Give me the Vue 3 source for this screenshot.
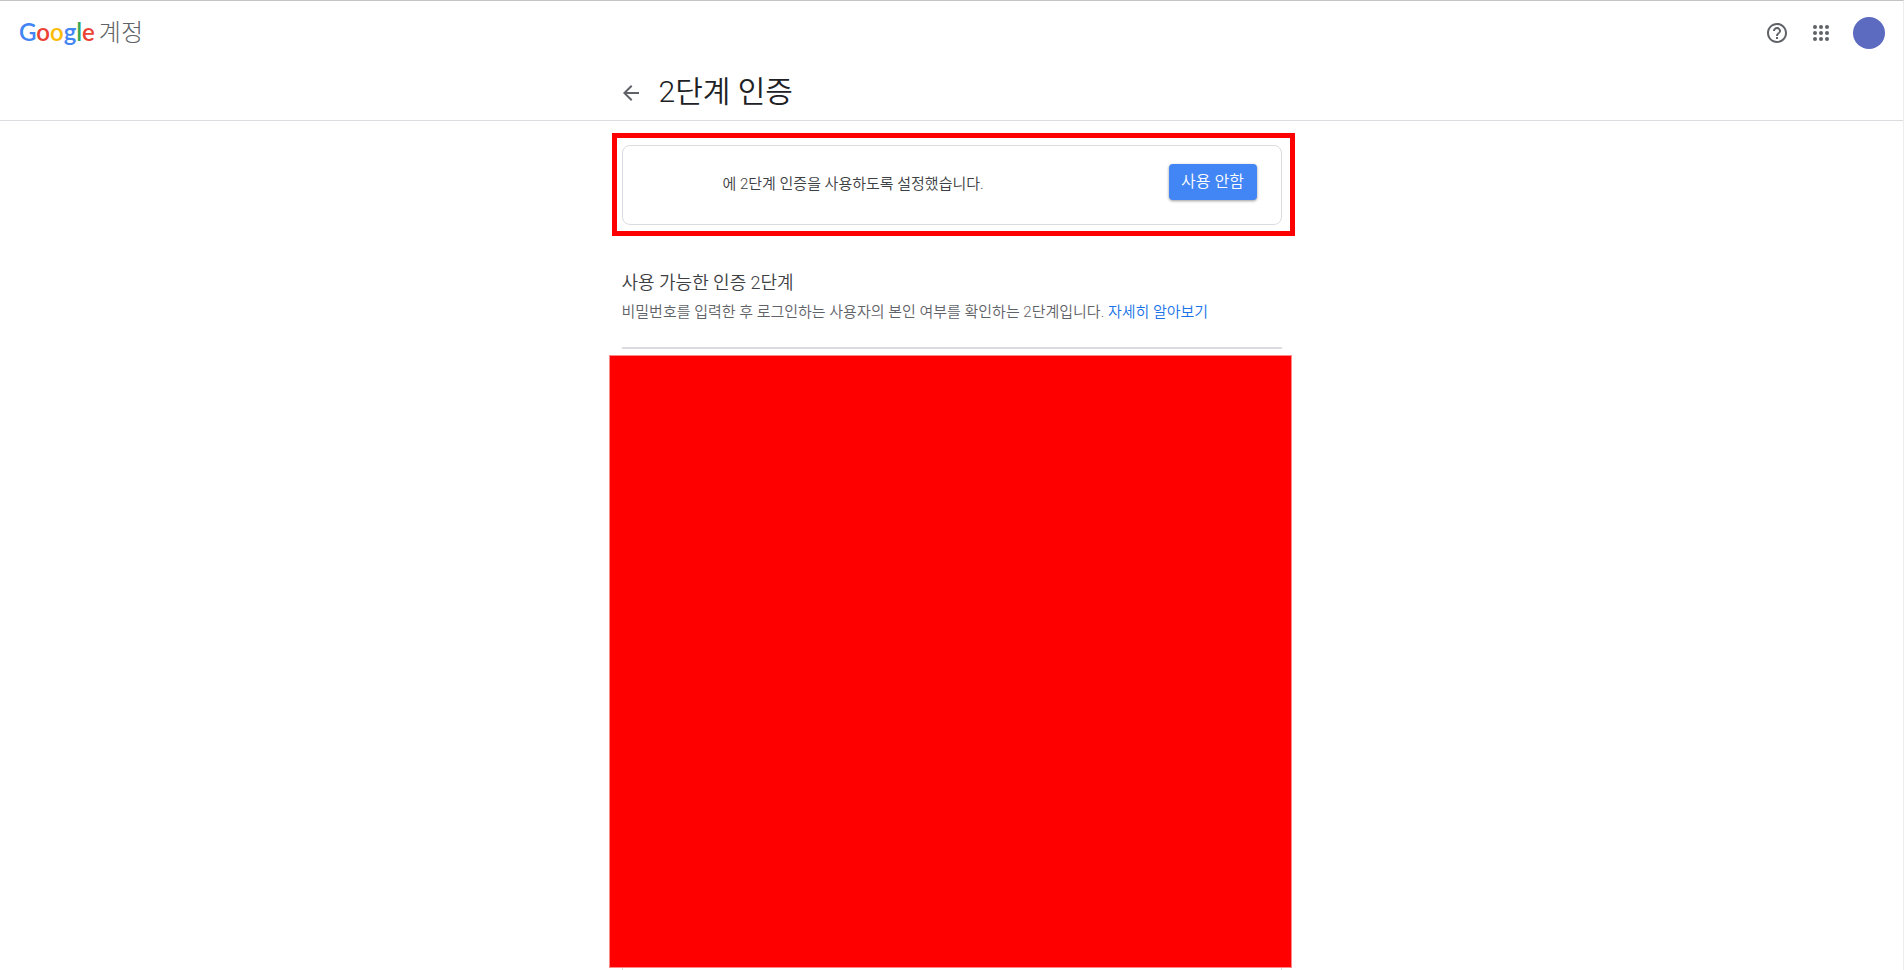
<script setup>
import { ref } from "vue";

const letters = [
	{ char: 'G', color: 'blue' },
	{ char: 'o', color: 'red' },
	{ char: 'o', color: 'yellow' },
	{ char: 'g', color: 'blue' },
	{ char: 'l', color: 'green' },
	{ char: 'e', color: 'red' },
];

// 3x3 dots of the apps icon
const dots = [];
for (let y = 6; y <= 18; y += 6) {
	for (let x = 6; x <= 18; x += 6) {
		dots.push({ x, y });
	}
}

const account = ref('');
</script>

<template>
	<div class="page">
		<header class="topbar">
			<a class="brand" href="#">
				<span class="logo"><span v-for="(l, i) in letters" :key="i" :class="l.color">{{ l.char }}</span></span>
				<span class="product">계정</span>
			</a>
			<nav class="tools">
				<button class="icon_btn" type="button" aria-label="도움말">
					<svg viewBox="0 0 24 24" width="24" height="24">
						<path d="M11 18h2v-2h-2v2zm1-16C6.48 2 2 6.48 2 12s4.48 10 10 10 10-4.48 10-10S17.52 2 12 2zm0 18c-4.41 0-8-3.59-8-8s3.59-8 8-8 8 3.59 8 8-3.59 8-8 8zm0-14c-2.21 0-4 1.79-4 4h2c0-1.1.9-2 2-2s2 .9 2 2c0 2-3 1.75-3 5h2c0-2.25 3-2.5 3-5 0-2.21-1.79-4-4-4z" />
					</svg>
				</button>
				<button class="icon_btn" type="button" aria-label="앱">
					<svg viewBox="0 0 24 24" width="24" height="24">
						<circle v-for="d in dots" :key="d.x + '-' + d.y" :cx="d.x" :cy="d.y" r="2" />
					</svg>
				</button>
				<button class="avatar" type="button" aria-label="프로필"></button>
			</nav>
		</header>

		<div class="titlebar">
			<div class="column title_row">
				<button class="back" type="button" aria-label="뒤로">
					<svg viewBox="0 0 24 24" width="24" height="24">
						<path d="M20 11H7.83l5.59-5.59L12 4l-8 8 8 8 1.41-1.41L7.83 13H20v-2z" />
					</svg>
				</button>
				<h1>2단계 인증</h1>
			</div>
		</div>

		<main class="column content">
			<section class="card">
				<p>{{ account }}에 2단계 인증을 사용하도록 설정했습니다.</p>
				<button class="primary" type="button">사용 안함</button>
				<div class="frame"></div>
			</section>

			<section class="steps">
				<h2>사용 가능한 인증 2단계</h2>
				<p>비밀번호를 입력한 후 로그인하는 사용자의 본인 여부를 확인하는 2단계입니다. <a href="#">자세히 알아보기</a></p>
			</section>

			<section class="methods">
				<div class="cover"></div>
			</section>
		</main>
	</div>
</template>

<style>
body {
	background: #fff;
}
</style>

<style scoped>
.page {
	min-height: 100vh;
	box-sizing: border-box;
	display: flex;
	flex-direction: column;
	border-top: 1px solid #c4c4c4;
	border-right: 1px solid #ededed;
	font-family: Roboto, "Noto Sans CJK KR", sans-serif;
	font-weight: 350;
	color: #3c4043;
}
h1, h2, p {
	margin: 0;
	font-weight: 350;
}
button {
	padding: 0;
	border: 0;
	background: none;
	font-family: inherit;
	cursor: pointer;
}
svg {
	display: block;
	fill: #5f6368;
}
a {
	color: #1a73e8;
	text-decoration: none;
}
.topbar {
	height: 64px;
	padding: 0 18px 0 19px;
	display: flex;
	align-items: center;
	justify-content: space-between;
}
.brand {
	display: flex;
	align-items: baseline;
	gap: 4px;
	line-height: 32px;
	padding-bottom: 2px;
}
.logo {
	font-family: Lato, sans-serif;
	font-size: 24px;
	font-weight: 600;
}
.blue { color: #4285f4; }
.red { color: #ea4335; }
.yellow { color: #fbbc05; }
.green { color: #34a853; }
.product {
	font-size: 24px;
	font-weight: 300;
	color: #5f6368;
}
.tools {
	display: flex;
	align-items: center;
	gap: 20px;
}
.avatar {
	width: 32px;
	height: 32px;
	border-radius: 50%;
	background: #5c6bc0;
}
.column {
	width: 100%;
	max-width: 660px;
	margin: 0 auto;
}
.titlebar {
	border-bottom: 1px solid #dadce0;
}
.title_row {
	height: 55px;
	display: flex;
	align-items: center;
	gap: 16px;
}
.back {
	margin-left: -3px;
}
h1 {
	font-size: 30px;
	line-height: 36px;
	color: #202124;
	padding-bottom: 2px;
}
.content {
	flex: 1;
	display: flex;
	flex-direction: column;
	padding-top: 24px;
}
.card {
	position: relative;
	height: 80px;
	box-sizing: border-box;
	display: flex;
	align-items: center;
	justify-content: space-between;
	padding: 0 24px 6px 100px;
	border: 1px solid #dadce0;
	border-radius: 8px;
	font-size: 15px;
	line-height: 20px;
}
.card p {
	padding-top: 4px;
}
.primary {
	width: 88px;
	height: 36px;
	padding-bottom: 4px;
	border-radius: 4px;
	background: #4285f4;
	box-shadow: 0 1px 3px rgba(0, 0, 0, .4);
	color: #fff;
	font-size: 16px;
	font-weight: 350;
}
.frame {
	position: absolute;
	inset: -13px -14px -12px -11px;
	border: 5px solid #f00;
	pointer-events: none;
}
.steps {
	padding: 46px 0 25px;
	border-bottom: 2px solid #dadce0;
}
h2 {
	font-size: 18px;
	line-height: 24px;
}
.steps p {
	padding-top: 7px;
	font-size: 15px;
	line-height: 20px;
	color: #5f6368;
}
.methods {
	position: relative;
	flex: 1;
	margin-top: 6px;
	border: 1px solid #dadce0;
	border-width: 0 1px;
}
.cover {
	position: absolute;
	inset: 0 -11px 2px -14px;
	box-sizing: border-box;
	border: 1px solid #f88;
	background: #f00;
}
</style>
